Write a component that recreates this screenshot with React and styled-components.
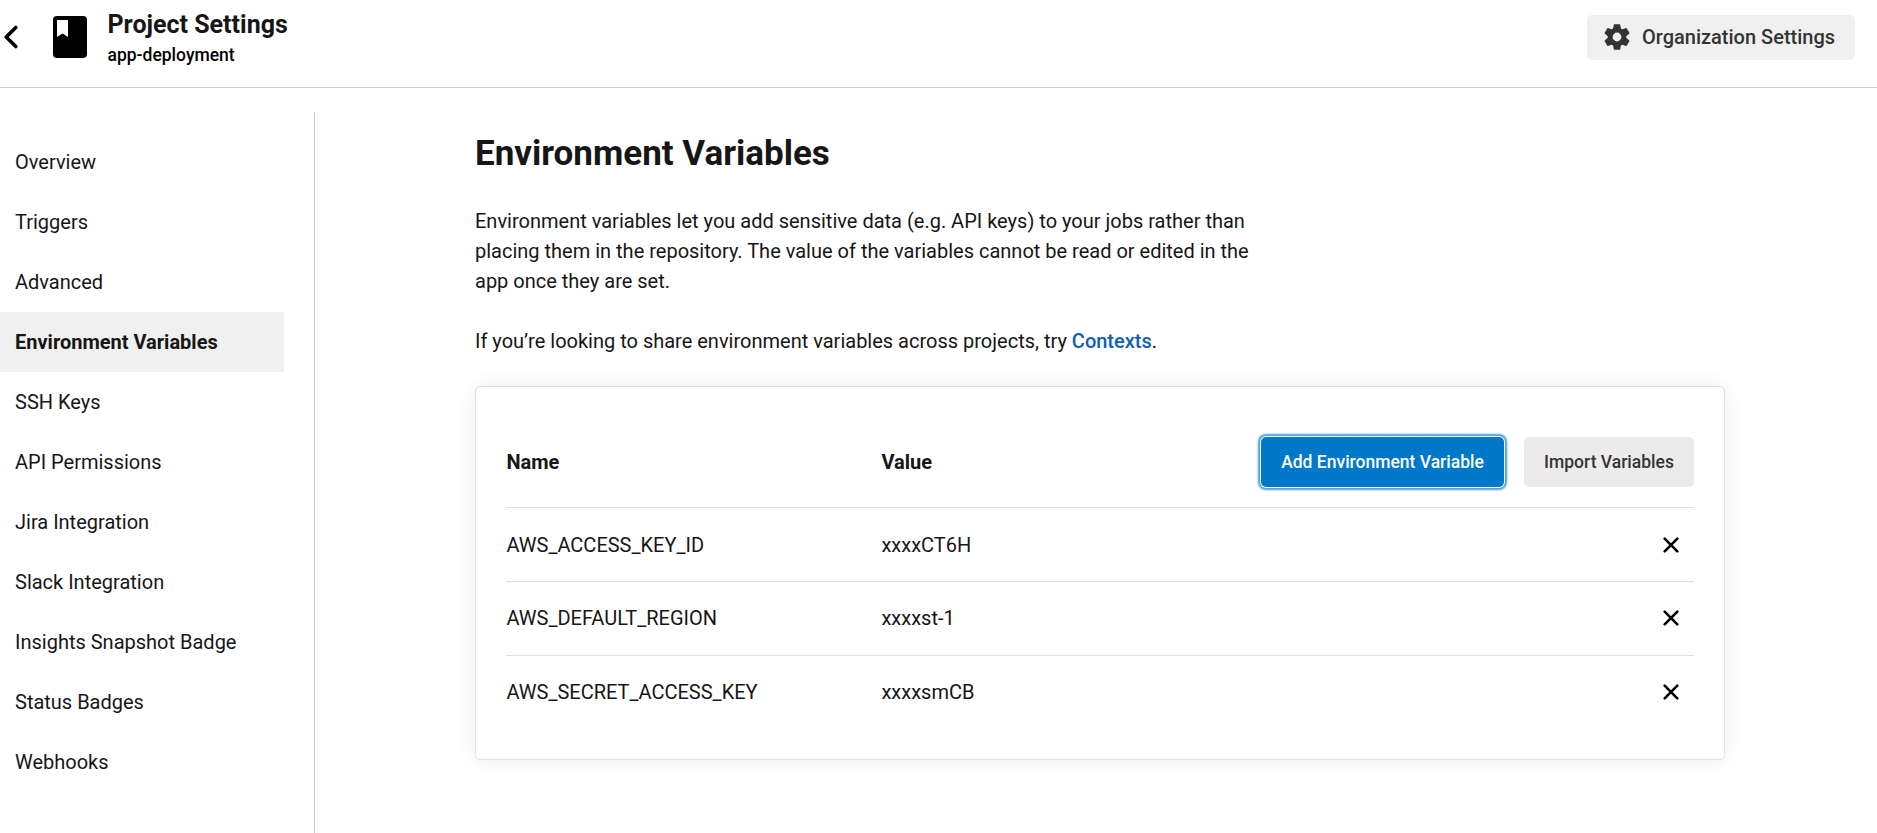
import React from 'react';
import styled, { createGlobalStyle } from 'styled-components';

const GlobalStyle = createGlobalStyle`
  *, *::before, *::after { box-sizing: border-box; }
  body {
    margin: 0;
    background: #fff;
    color: #161616;
    font-family: Roboto, "Liberation Sans", sans-serif;
    font-size: 20px;
    line-height: 30px;
  }
  h1, h2, p, ul { margin: 0; padding: 0; }
  button { font-family: inherit; border: 0; cursor: pointer; }
`;

const Page = styled.div`
  height: 833px;
  display: flex;
  flex-direction: column;
  overflow: hidden;
`;

const Header = styled.header`
  flex: none;
  height: 88px;
  display: flex;
  align-items: flex-start;
  padding-right: 22px;
  border-bottom: 1px solid #ccc;
`;

const BackIcon = styled.svg`
  width: 20px;
  height: 26px;
  margin-top: 24px;
`;

const ProjectIcon = styled.svg`
  width: 34px;
  height: 42px;
  margin: 16px 20.5px 0 33px;
`;

const Titles = styled.div`
  flex: 1;
  padding-top: 10px;
`;

const Title = styled.h2`
  font-size: 25px;
  font-weight: 700;
  line-height: 30px;
`;

const ProjectName = styled.p`
  color: #000;
  font-size: 17.5px;
  font-weight: 500;
  line-height: 30px;
`;

const OrgButton = styled.button`
  display: flex;
  align-items: center;
  gap: 10px;
  width: 268px;
  height: 45px;
  margin-top: 15px;
  padding: 0 0 1px 15px;
  border-radius: 5px;
  background: #f0f0f0;
  color: #343434;
  font-size: 20px;
  font-weight: 500;
  white-space: nowrap;
`;

const GearIcon = styled.svg`
  width: 30px;
  height: 30px;
`;

const Body = styled.div`
  flex: 1;
  display: flex;
  padding-top: 24px;
`;

const Sidebar = styled.nav`
  width: 315px;
  flex: none;
  padding: 20px 30px 0 0;
  border-right: 1px solid #ccc;
`;

const NavItem = styled.div`
  height: 60px;
  padding-left: 15px;
  line-height: 60px;
  background: ${(p) => (p.$active ? '#f0f0f0' : 'transparent')};
  font-weight: ${(p) => (p.$active ? 700 : 400)};
`;

const Main = styled.main`
  width: 1250px;
  margin-left: 160px;
`;

const Heading = styled.h1`
  margin-top: 17px;
  font-size: 35px;
  font-weight: 700;
  line-height: 50px;
`;

const Paragraph = styled.p`
  width: 800px;
  margin-top: 27px;
  white-space: pre-line;

  & + & { margin-top: 30px; }
`;

const TextLink = styled.a`
  color: #0e5fb3;
  font-weight: 500;
`;

const Card = styled.section`
  height: 374px;
  margin-top: 30px;
  padding: 30px 30px 0 30.4px;
  border: 1px solid #e0e0e0;
  border-radius: 5px;
  background: #fff;
  box-shadow: 0 0 20px rgba(0, 0, 0, 0.08);
`;

const Row = styled.div`
  display: grid;
  grid-template-columns: 375px 1fr auto;
  align-items: center;
  height: 73.75px;
  padding-bottom: 0.5px;

  & + & { border-top: 1px solid #e0e0e0; }
`;

const HeadRow = styled(Row)`
  height: 90.45px;
  padding-bottom: 0;
  font-weight: 700;
`;

const Actions = styled.div`
  display: flex;
  gap: 20px;
`;

const Button = styled.button`
  width: ${(p) => (p.$primary ? 243 : 170)}px;
  height: 50px;
  padding: 0;
  border-radius: 5px;
  background: ${(p) => (p.$primary ? '#0078ca' : '#ebebeb')};
  color: ${(p) => (p.$primary ? '#fff' : '#343434')};
  font-size: 17.5px;
  font-weight: 500;
  white-space: nowrap;
  box-shadow: ${(p) => (p.$primary ? '0 0 0 1px #fff, 0 0 2px 3px rgba(0, 120, 202, 0.72)' : 'none')};
`;

const RemoveIcon = styled.svg`
  width: 16px;
  height: 16px;
  margin-right: 15px;
`;

const navItems = [
  'Overview', 'Triggers', 'Advanced', 'Environment Variables', 'SSH Keys',
  'API Permissions', 'Jira Integration', 'Slack Integration',
  'Insights Snapshot Badge', 'Status Badges', 'Webhooks',
];

const variables = [
  { name: 'AWS_ACCESS_KEY_ID', value: 'xxxxCT6H' },
  { name: 'AWS_DEFAULT_REGION', value: 'xxxxst-1' },
  { name: 'AWS_SECRET_ACCESS_KEY', value: 'xxxxsmCB' },
];

const gearTeeth = [0, 60, 120, 180, 240, 300];

export default function App() {
  return (
    <>
      <GlobalStyle />
      <Page>
        <Header>
          <BackIcon viewBox="0 0 20 26" fill="none" stroke="#000" strokeWidth="3.6">
            <path d="M15.8 3.5 L6.2 13 L15.8 22.5" strokeLinecap="round" strokeLinejoin="round" />
          </BackIcon>
          <ProjectIcon viewBox="0 0 34 42">
            <rect width="34" height="42" rx="4" fill="#000" />
            <path d="M4 4h11v17l-5.5-3.5L4 21z" fill="#fff" />
          </ProjectIcon>
          <Titles>
            <Title>Project Settings</Title>
            <ProjectName>app-deployment</ProjectName>
          </Titles>
          <OrgButton>
            <GearIcon viewBox="-15 -15 30 30" fill="#343434">
              <circle r="6.9" fill="none" stroke="#343434" strokeWidth="5" />
              {gearTeeth.map((angle) => (
                <path
                  key={angle}
                  d="M-4 -7.5 L-3.3 -12.1 Q-3.2 -12.8 -2.5 -12.8 H2.5 Q3.2 -12.8 3.3 -12.1 L4 -7.5 Z"
                  transform={`rotate(${angle})`}
                />
              ))}
            </GearIcon>
            Organization Settings
          </OrgButton>
        </Header>
        <Body>
          <Sidebar>
            {navItems.map((item) => (
              <NavItem key={item} $active={item === 'Environment Variables'}>{item}</NavItem>
            ))}
          </Sidebar>
          <Main>
            <Heading>Environment Variables</Heading>
            <Paragraph>
              {'Environment variables let you add sensitive data (e.g. API keys) to your jobs rather than\nplacing them in the repository. The value of the variables cannot be read or edited in the\napp once they are set.'}
            </Paragraph>
            <Paragraph>
              If you’re looking to share environment variables across projects, try <TextLink>Contexts</TextLink>.
            </Paragraph>
            <Card>
              <HeadRow>
                <span>Name</span>
                <span>Value</span>
                <Actions>
                  <Button $primary>Add Environment Variable</Button>
                  <Button>Import Variables</Button>
                </Actions>
              </HeadRow>
              {variables.map((v) => (
                <Row key={v.name}>
                  <span>{v.name}</span>
                  <span>{v.value}</span>
                  <RemoveIcon viewBox="0 0 16 16" stroke="#000" strokeWidth="2.6" strokeLinecap="round">
                    <path d="M1.7 1.7 L14.3 14.3 M14.3 1.7 L1.7 14.3" />
                  </RemoveIcon>
                </Row>
              ))}
            </Card>
          </Main>
        </Body>
      </Page>
    </>
  );
}
